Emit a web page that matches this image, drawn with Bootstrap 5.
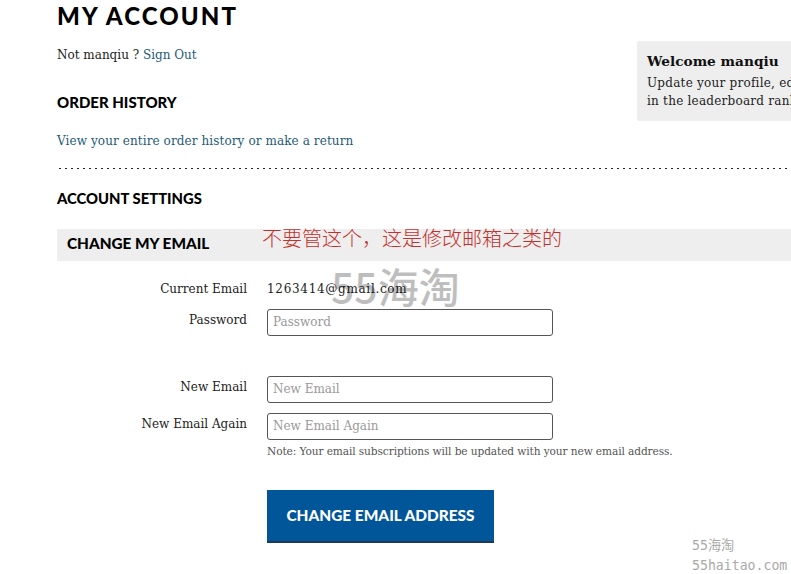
<!DOCTYPE html>
<html lang="en">
<head>
<meta charset="utf-8">
<title>My Account</title>
<link rel="stylesheet" href="https://cdn.jsdelivr.net/npm/bootstrap@5.3.0/dist/css/bootstrap.min.css">
<style>
html,body{height:574px;overflow:hidden;background:#fff}
body{font-family:"DejaVu Serif","Noto Sans CJK SC",serif;font-size:12px;color:#222;position:relative}
a{color:#1d5a78;text-decoration:none}
.acct-wrap{width:791px;height:574px;overflow:hidden;padding-left:57px}
.top-split{width:734px}
.top-main{width:580px;flex:none}
.acct-title,.sec-title,.band-title,.go-btn{font-family:"Lato","Noto Sans",sans-serif;font-weight:900;color:#000;margin:0}
.acct-title{font-size:24px;line-height:30px;letter-spacing:2.1px;padding-top:1px}
.who-line{margin:16px 0 0;line-height:16px;height:16px}
.sec-title{font-size:15px;line-height:20px;letter-spacing:0}
.set-title{font-size:14.8px}
.hist-title{margin-top:29px}
.hist-link{margin:21px 0 0;line-height:16px;letter-spacing:.1px}
.hello-box{width:220px;flex:none;height:80px;margin-top:41px;background:#eee;padding:10px 0 0 10px;white-space:nowrap;overflow:hidden;line-height:18px;border-radius:2px 0 0 2px;letter-spacing:.02em}
.hello-box strong{display:block;font-size:13.7px;line-height:20px;margin-bottom:3px;font-weight:700;color:#111;letter-spacing:0}
.dot-rule{height:3px;margin-top:18px;background-image:radial-gradient(circle,#222 .9px,transparent 1.1px);background-size:6px 3px;background-repeat:repeat-x}
.set-title{margin-top:18px}
.band{height:32px;background:#eee;margin-top:21px;padding-left:10px}
.band-title{font-size:15.3px;line-height:28px}
.band-note{color:#c4302b;font-family:"Noto Sans CJK SC",sans-serif;font-weight:300;font-size:20px;line-height:20px;position:absolute;left:262px;top:228px;white-space:nowrap}
.form-area{margin-top:20px}
.fld{display:flex;align-items:flex-start;column-gap:20px}
.fld-label{width:190px;flex:none;text-align:right;line-height:16px;margin:0;color:#222}
label.fld-label{padding-top:3px}
.form-control.fld-in{width:286px;height:27px;padding:0 5px 2px;font-size:12px;font-family:inherit;border:1px solid #555;border-radius:3px;color:#222;background:transparent}
.fld-in::placeholder{color:#999;opacity:1}
.email-val{letter-spacing:.7px;line-height:16px}
.current-row{margin-bottom:12px}
.pass-row{margin-bottom:40px}
.new-row{margin-bottom:10px}
.fld-note{margin:3px 0 0 210px;font-size:10.6px;line-height:16px;color:#555;white-space:nowrap;letter-spacing:-.01em}
.go-btn.btn{display:block;margin:31px 0 0 210px;width:227px;height:53px;background:#01569a;color:#fff;border:0;border-bottom:2px solid #1c3b57;border-radius:0;font-size:15.4px;padding:0}
.wm-big{position:absolute;left:331px;top:260px;font-family:"Noto Sans CJK SC",sans-serif;font-weight:500;font-size:41px;line-height:50px;color:#000;opacity:.25;white-space:nowrap;letter-spacing:0}
.wm-small{position:absolute;left:692px;top:536px;font-family:"DejaVu Sans Mono","Noto Sans CJK SC",monospace;font-size:13.2px;line-height:20px;color:#aaa;white-space:nowrap}
</style>
</head>
<body>
<div class="wm-big">55海淘</div>
<div class="acct-wrap">
  <div class="top-split d-flex">
    <div class="top-main">
      <h1 class="acct-title">MY ACCOUNT</h1>
      <p class="who-line">Not manqiu ? <a href="#">Sign Out</a></p>
      <h2 class="sec-title hist-title">ORDER HISTORY</h2>
      <p class="hist-link"><a href="#">View your entire order history or make a return</a></p>
    </div>
    <aside class="hello-box">
      <strong>Welcome manqiu</strong>
      Update your profile, edit your settings<br>in the leaderboard rankings
    </aside>
  </div>
  <div class="dot-rule"></div>
  <h2 class="sec-title set-title">ACCOUNT SETTINGS</h2>
  <div class="band"><h3 class="band-title">CHANGE MY EMAIL</h3></div>
  <form class="form-area">
    <div class="fld current-row"><p class="fld-label">Current Email</p><div class="email-val">1263414@gmail.com</div></div>
    <div class="fld pass-row"><label class="fld-label">Password</label><input class="form-control fld-in" type="password" placeholder="Password"></div>
    <div class="fld new-row"><label class="fld-label">New Email</label><input class="form-control fld-in" type="email" placeholder="New Email"></div>
    <div class="fld"><label class="fld-label">New Email Again</label><input class="form-control fld-in" type="email" placeholder="New Email Again"></div>
    <p class="fld-note">Note: Your email subscriptions will be updated with your new email address.</p>
    <button type="button" class="btn go-btn">CHANGE EMAIL ADDRESS</button>
  </form>
</div>
<div class="band-note">不要管这个，这是修改邮箱之类的</div>
<div class="wm-small">55海淘<br>55haitao.com</div>
</body>
</html>
